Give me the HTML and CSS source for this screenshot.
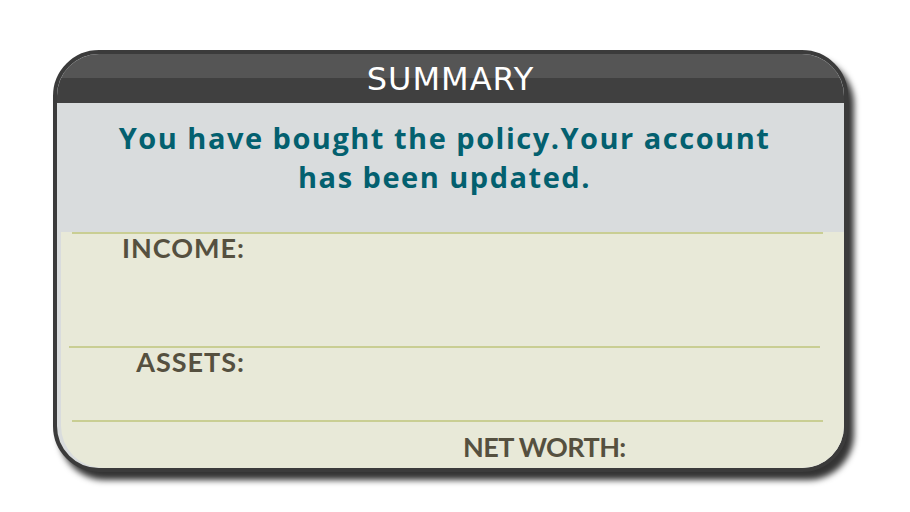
FILE: index.html
```html
<!DOCTYPE html>
<html>
<head>
<meta charset="utf-8">
<link rel="stylesheet" href="styles.css">
</head>
<body>
<div class="card">
  <div class="header">
    <div class="band-top"></div>
    <div class="band-bottom"></div>
    <div class="title">SUMMARY</div>
  </div>
  <div class="message">You have bought the policy.Your account<br>has been updated.</div>
  <div class="body">
    <div class="row row-income">
      <div class="label label-income">INCOME:</div>
    </div>
    <div class="row row-assets">
      <div class="label label-assets">ASSETS:</div>
    </div>
    <div class="row row-net">
      <div class="label label-net">NET WORTH:</div>
    </div>
  </div>
</div>
</body>
</html>
```

FILE: styles.css
```css
html, body {
  margin: 0;
  padding: 0;
  background: #ffffff;
}
body {
  width: 910px;
  height: 512px;
  overflow: hidden;
  padding: 50px 0 0 53px;
  box-sizing: border-box;
}
.card {
  width: 795px;
  height: 422px;
  box-sizing: border-box;
  border: 4px solid #3b3b3b;
  border-radius: 46px;
  background: #d9dcdd;
  overflow: hidden;
  box-shadow: 6px 8px 6px rgba(0, 0, 0, 0.8);
  display: flex;
  flex-direction: column;
}
.header {
  position: relative;
  height: 49px;
  display: flex;
  flex-direction: column;
  flex: none;
}
.band-top {
  height: 24px;
  background: #555555;
}
.band-bottom {
  flex: 1;
  background: #404040;
}
.title {
  position: absolute;
  inset: 0;
  display: flex;
  align-items: center;
  justify-content: center;
  color: #ffffff;
  font-family: "DejaVu Sans", sans-serif;
  font-size: 32px;
  letter-spacing: 1px;
}
.message {
  height: 129px;
  flex: none;
  box-sizing: border-box;
  padding: 15px 12px 0 0;
  text-align: center;
  color: #03606f;
  font-family: "Open Sans", sans-serif;
  font-weight: 700;
  font-size: 29px;
  letter-spacing: 1.5px;
  line-height: 39px;
}
.body {
  flex: 1;
  margin-left: 4px;
  background: #e8e9d8;
  border-bottom-left-radius: 42px;
  display: flex;
  flex-direction: column;
  font-family: Lato, sans-serif;
  font-weight: 700;
  font-size: 27px;
  line-height: 27px;
  color: #55503f;
}
.row {
  border-top: 2px solid #c9ce93;
  box-sizing: border-box;
}
.row-income {
  height: 114px;
  margin: 0 21px 0 11px;
}
.row-assets {
  height: 74px;
  margin: 0 24px 0 8px;
}
.row-net {
  flex: 1;
  margin: 0 21px 0 11px;
}
.label {
  text-align: right;
  letter-spacing: 1px;
}
.label-income {
  width: 173px;
}
.label-assets {
  width: 176px;
}
.label-net {
  text-align: left;
  letter-spacing: -0.6px;
  padding: 11px 0 0 391px;
}
```
